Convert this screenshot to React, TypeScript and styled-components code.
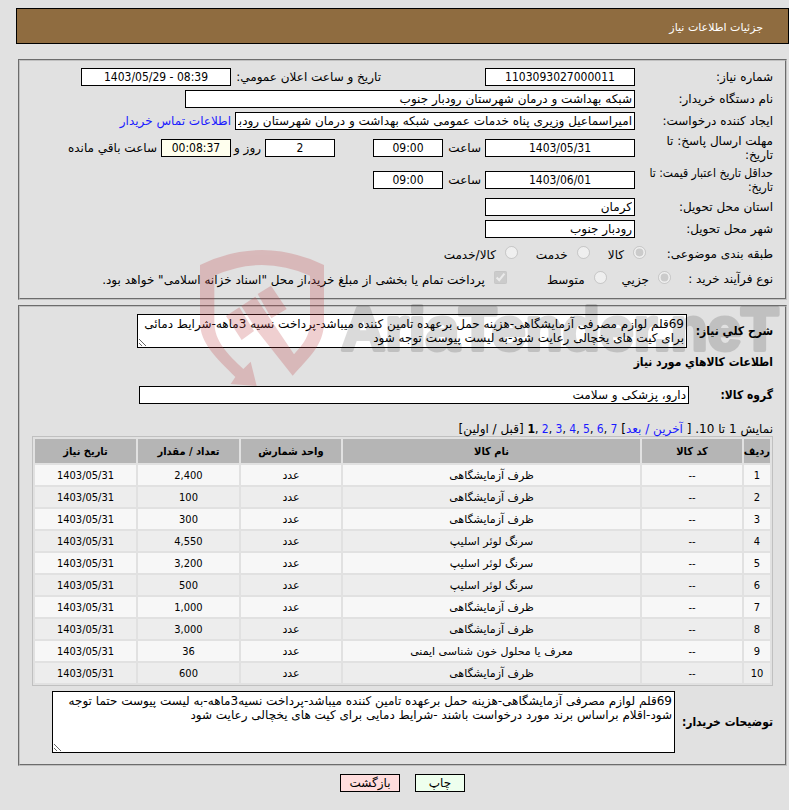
import React from "react";
import styled, { createGlobalStyle, css } from "styled-components";

const textFont = `"DejaVu Sans", Tahoma, sans-serif`;
const narrowFont = `"DejaVu Sans Condensed", "DejaVu Sans", Tahoma, sans-serif`;

const GlobalStyle = createGlobalStyle`
  *, *::before, *::after { box-sizing: border-box; }
  body {
    margin: 0;
    background: #e1e1e1;
    color: #000;
    font: 12px/14px ${textFont};
  }
  a { color: #1a1aff; text-decoration: none; }
`;

const Page = styled.main`
  position: relative;
  padding: 8px 0 18px 16px;
`;

const TitleBar = styled.header`
  display: flex;
  align-items: center;
  height: 36px;
  padding: 3px 25px 0;
  border: 1px solid #000;
  background: #8f6c40;
  color: #fff;
`;

const Title = styled.h1`
  margin: 0;
  font-size: 11px;
  font-weight: normal;
`;

const Panel = styled.section<{ $top: number; $bottom: number }>`
  margin: ${(p) => p.$top}px 2px 0;
  padding: 5px 12px ${(p) => p.$bottom}px;
  border: 2px groove #c0c0c0;
`;

const Row = styled.div<{ $height?: number }>`
  display: flex;
  align-items: center;
  min-height: ${(p) => p.$height ?? 22}px;
  white-space: nowrap;
`;

const RowLabel = styled.label<{ $width?: number; $bold?: boolean; $narrow?: boolean }>`
  flex: none;
  width: ${(p) => p.$width ?? 138}px;
  font-family: ${(p) => (p.$bold || p.$narrow ? narrowFont : textFont)};
  font-weight: ${(p) => (p.$bold ? "bold" : "normal")};
`;

const Fields = styled.div<{ $gap?: number }>`
  display: flex;
  flex: 1;
  align-items: center;
  gap: ${(p) => p.$gap ?? 4}px;
  min-width: 0;
`;

const InlineLabel = styled.label<{ $width?: number; $before?: number }>`
  flex: none;
  ${(p) => p.$width && css`width: ${p.$width}px;`}
  margin-inline-start: ${(p) => p.$before ?? 0}px;
`;

const boxed = css`
  border: 1px solid #000;
  border-radius: 0;
  background: #fff;
  color: #000;
  font: 12px/14px ${textFont};
`;

const TextField = styled.input<{ $width: number; $before?: number; $digits?: boolean; $tint?: string }>`
  ${boxed}
  flex: none;
  width: ${(p) => p.$width}px;
  height: 18px;
  padding: 0 2px;
  margin-inline-start: ${(p) => p.$before ?? 0}px;
  ${(p) =>
    p.$digits &&
    css`
      font-family: ${narrowFont};
      text-align: center;
    `}
  ${(p) => p.$tint && css`background: ${p.$tint};`}
`;

const TextArea = styled.textarea<{ $width: number; $height: number }>`
  ${boxed}
  display: block;
  flex: none;
  width: ${(p) => p.$width}px;
  height: ${(p) => p.$height}px;
  padding: 2px;
  overflow: hidden;
`;

const Choice = styled.label<{ $before?: number }>`
  display: flex;
  gap: 9px;
  margin-inline-start: ${(p) => p.$before ?? 0}px;

  input {
    width: 13px;
    height: 13px;
    margin: 0;
  }
  span {
    padding-top: 2px;
  }
`;

const SectionHeading = styled.h2`
  margin: 5px 0 17px;
  font: bold 12px/14px ${narrowFont};
`;

const Pager = styled.nav`
  margin-top: 18px;
  height: 14px;
  white-space: nowrap;
`;

const PageNumbers = styled.span`
  font-family: ${narrowFont};
`;

const ItemTable = styled.table`
  width: 100%;
  margin-bottom: 5px;
  border: 1px solid #c0c0c0;
  border-spacing: 2px;
  table-layout: fixed;
  font: 11px/14px ${narrowFont};
  text-align: center;

  th {
    height: 24px;
    padding: 2px 0 0;
    background: #b5b5b5;
  }
  td {
    height: 20px;
    padding: 1px 0 0;
    background: #f7f7f7;
  }
  tbody tr:nth-child(even) td {
    background: #ededed;
  }
`;

const WordCell = styled.td`
  font-family: ${textFont};
`;

const Column = styled.col<{ $width?: number }>`
  ${(p) => p.$width && css`width: ${p.$width}px;`}
`;

const Actions = styled.footer`
  display: flex;
  justify-content: center;
  gap: 15px;
  margin-top: 8px;
`;

const ActionButton = styled.button<{ $tint: string; $width: number }>`
  ${boxed}
  width: ${(p) => p.$width}px;
  height: 18px;
  padding: 0;
  background: ${(p) => p.$tint};
`;

const Watermark = styled.svg`
  position: absolute;
  left: 200px;
  top: 248px;
  width: 585px;
  height: 140px;
  pointer-events: none;
`;

const items: [string, string][] = [
  ["ظرف آزمایشگاهی", "2,400"],
  ["ظرف آزمایشگاهی", "100"],
  ["ظرف آزمایشگاهی", "300"],
  ["سرنگ لوئر اسلیپ", "4,550"],
  ["سرنگ لوئر اسلیپ", "3,200"],
  ["سرنگ لوئر اسلیپ", "500"],
  ["ظرف آزمایشگاهی", "1,000"],
  ["ظرف آزمایشگاهی", "3,000"],
  ["معرف یا محلول خون شناسی ایمنی", "36"],
  ["ظرف آزمایشگاهی", "600"],
];

function BrandMark() {
  return (
    <Watermark viewBox="60 39 1755 420" aria-hidden="true">
      <g fill="#c04246" opacity="0.25">
        <path d="M60 90Q245 0 432 90V262C432 330 385 370 338 422L232 288L184 213L226 185L342 358C372 325 390 300 390 262V122Q245 58 103 122V262C103 320 145 360 190 402L212 380L230 453L152 447L166 426C110 370 60 325 60 262Z" />
        <path d="M233 177L273 152L320 222L274 250Z" />
        <path d="M138 243L178 217L222 288L185 315Z" />
      </g>
      <g
        opacity="0.14"
        stroke="#000"
        strokeWidth="12"
        strokeLinejoin="round"
        fontFamily="'Liberation Sans', sans-serif"
        fontWeight="bold"
        fontSize="182"
      >
        <text x="484" y="344" direction="ltr">AriaTender.neT</text>
      </g>
    </Watermark>
  );
}

export default function App() {
  return (
    <Page dir="rtl" lang="fa">
      <GlobalStyle />
      <TitleBar>
        <Title>جزئیات اطلاعات نیاز</Title>
      </TitleBar>

      <Panel $top={15} $bottom={8}>
        <Row>
          <RowLabel htmlFor="need-no">شماره نیاز:</RowLabel>
          <Fields>
            <TextField id="need-no" $width={150} $digits readOnly value="1103093027000011" />
            <InlineLabel htmlFor="announced" $before={100} $width={146}>تاریخ و ساعت اعلان عمومي:</InlineLabel>
            <TextField id="announced" dir="ltr" $width={150} $digits readOnly value="1403/05/29 - 08:39" />
          </Fields>
        </Row>
        <Row>
          <RowLabel htmlFor="buyer">نام دستگاه خریدار:</RowLabel>
          <Fields>
            <TextField id="buyer" $width={450} readOnly value="شبکه بهداشت و درمان شهرستان رودبار جنوب" />
          </Fields>
        </Row>
        <Row>
          <RowLabel htmlFor="creator">ایجاد کننده درخواست:</RowLabel>
          <Fields>
            <TextField
              id="creator"
              $width={400}
              readOnly
              value="امیراسماعیل وزیری پناه خدمات عمومی شبکه بهداشت و درمان شهرستان رودبار جنوب"
            />
            <a href="#contact">اطلاعات تماس خریدار</a>
          </Fields>
        </Row>
        <Row $height={32}>
          <RowLabel htmlFor="reply-date">مهلت ارسال پاسخ: تا<br />تاریخ:</RowLabel>
          <Fields>
            <TextField id="reply-date" $width={150} $digits readOnly value="1403/05/31" />
            <InlineLabel htmlFor="reply-hour" $width={34}>ساعت</InlineLabel>
            <TextField id="reply-hour" $width={70} $digits readOnly value="09:00" />
            <TextField id="days-left" $before={34} $width={70} $digits readOnly value="2" />
            <InlineLabel htmlFor="days-left" $width={26}>روز و</InlineLabel>
            <TextField id="time-left" $width={70} $digits $tint="#ffffee" readOnly value="00:08:37" />
            <InlineLabel htmlFor="time-left">ساعت باقي مانده</InlineLabel>
          </Fields>
        </Row>
        <Row $height={32}>
          <RowLabel htmlFor="price-date" $narrow>حداقل تاریخ اعتبار قیمت: تا<br />تاریخ:</RowLabel>
          <Fields>
            <TextField id="price-date" $width={150} $digits readOnly value="1403/06/01" />
            <InlineLabel htmlFor="price-hour" $width={34}>ساعت</InlineLabel>
            <TextField id="price-hour" $width={70} $digits readOnly value="09:00" />
          </Fields>
        </Row>
        <Row>
          <RowLabel htmlFor="province">استان محل تحویل:</RowLabel>
          <TextField id="province" $width={150} readOnly value="کرمان" />
        </Row>
        <Row>
          <RowLabel htmlFor="city">شهر محل تحویل:</RowLabel>
          <TextField id="city" $width={150} readOnly value="رودبار جنوب" />
        </Row>
        <Row $height={28}>
          <RowLabel as="span" $width={127}>طبقه بندی موضوعی:</RowLabel>
          <Fields $gap={18}>
            <Choice><input type="radio" name="subject" disabled defaultChecked /><span>کالا</span></Choice>
            <Choice><input type="radio" name="subject" disabled /><span>خدمت</span></Choice>
            <Choice><input type="radio" name="subject" disabled /><span>کالا/خدمت</span></Choice>
          </Fields>
        </Row>
        <Row>
          <RowLabel as="span" $width={102}>نوع فرآیند خرید :</RowLabel>
          <Fields $gap={15}>
            <Choice><input type="radio" name="process" disabled defaultChecked /><span>جزیي</span></Choice>
            <Choice><input type="radio" name="process" disabled /><span>متوسط</span></Choice>
            <Choice $before={25}>
              <input type="checkbox" disabled defaultChecked />
              <span>پرداخت تمام یا بخشی از مبلغ خرید،از محل "اسناد خزانه اسلامی" خواهد بود.</span>
            </Choice>
          </Fields>
        </Row>
      </Panel>

      <Panel $top={5} $bottom={11}>
        <Row $height={38}>
          <RowLabel htmlFor="summary" $bold $width={86}>شرح کلي نیاز:</RowLabel>
          <TextArea
            id="summary"
            $width={550}
            $height={34}
            readOnly
            value="69قلم لوازم مصرفی آزمایشگاهی-هزینه حمل برعهده تامین کننده میباشد-پرداخت نسیه 3ماهه-شرایط دمائی برای کیت های یخچالی رعایت شود-به لیست پیوست توجه شود"
          />
        </Row>
        <SectionHeading>اطلاعات کالاهاي مورد نیاز</SectionHeading>
        <Row $height={18}>
          <RowLabel htmlFor="group" $bold $width={84}>گروه کالا:</RowLabel>
          <TextField id="group" $width={550} readOnly value="دارو، پزشکی و سلامت" />
        </Row>
        <Pager>
          نمایش 1 تا 10. [ <a href="#last">آخرین</a> <a href="#next">/ بعد</a>]{" "}
          <PageNumbers>
            <a href="#7">7</a>{" "}
            {[6, 5, 4, 3, 2].map((n) => (
              <React.Fragment key={n}>,<a href={`#${n}`}>{n}</a>{" "}</React.Fragment>
            ))}
            ,<b>1</b>
          </PageNumbers>{" "}
          [قبل / اولین]
        </Pager>
        <ItemTable>
          <colgroup>
            <Column $width={26} />
            <Column $width={100} />
            <Column />
            <Column $width={100} />
            <Column $width={101} />
            <Column $width={101} />
          </colgroup>
          <thead>
            <tr>
              <th>ردیف</th>
              <th>کد کالا</th>
              <th>نام کالا</th>
              <th>واحد شمارش</th>
              <th>تعداد / مقدار</th>
              <th>تاریخ نیاز</th>
            </tr>
          </thead>
          <tbody>
            {items.map(([name, amount], i) => (
              <tr key={i}>
                <td>{i + 1}</td>
                <td>--</td>
                <WordCell>{name}</WordCell>
                <WordCell>عدد</WordCell>
                <td>{amount}</td>
                <td>1403/05/31</td>
              </tr>
            ))}
          </tbody>
        </ItemTable>
        <Row>
          <RowLabel htmlFor="notes" $bold $width={98}>توضیحات خریدار:</RowLabel>
          <TextArea
            id="notes"
            $width={623}
            $height={62}
            readOnly
            value="69قلم لوازم مصرفی آزمایشگاهی-هزینه حمل برعهده تامین کننده میباشد-پرداخت نسیه3ماهه-به لیست پیوست حتما توجه شود-اقلام براساس برند مورد درخواست باشند -شرایط دمایی برای کیت های یخچالی رعایت شود"
          />
        </Row>
      </Panel>

      <Actions>
        <ActionButton $tint="#eeffee" $width={50}>چاپ</ActionButton>
        <ActionButton $tint="#ffdddd" $width={60}>بازگشت</ActionButton>
      </Actions>
      <BrandMark />
    </Page>
  );
}
